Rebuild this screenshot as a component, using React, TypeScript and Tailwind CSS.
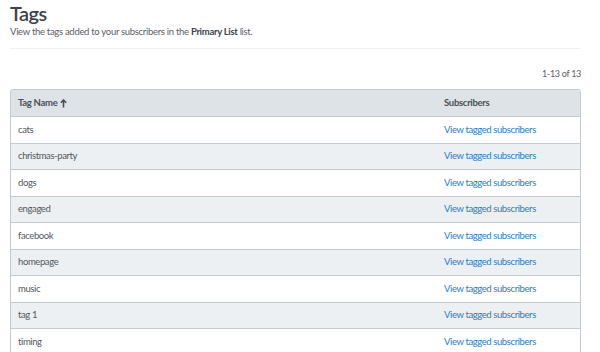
const tags = ["cats", "christmas-party", "dogs", "engaged", "facebook", "homepage", "music", "tag 1", "timing"];

export default function App() {
  return (
    <div
      className="h-[352px] w-[600px] overflow-hidden bg-white px-[10px] text-[#4a4f55]"
      style={{ fontFamily: "Lato, 'Noto Sans', sans-serif" }}
    >
      <h1 className="pt-[1px] text-[20px] font-semibold leading-[24px] tracking-[-0.6px] text-[#3d4349]">Tags</h1>
      <p className="text-[9.5px] leading-[14px] tracking-[-0.3px] text-[#5a6066]">
        View the tags added to your subscribers in the <span className="font-bold text-[#3d4349]">Primary List</span> list.
      </p>
      <div className="mt-[9px] w-[570px] border-t border-[#eef0f2]" />
      <div className="mt-[19px] flex w-[571px] justify-end text-[9px] leading-[12px] tracking-[-0.3px] text-[#5a6066]">1-13 of 13</div>
      <div className="mt-[9px] w-[571px] overflow-hidden rounded-t-[3px] border border-[#c3cbd0]">
        <div className="flex h-[26px] items-center bg-[#dde3e6] text-[9.5px] font-bold tracking-[-0.3px] text-[#4a4f55]">
          <div className="flex flex-1 items-center gap-[3px] pl-[7px]">
            Tag Name
            <svg width="7" height="9" viewBox="0 0 7 9" className="mt-[1px]">
              <path d="M3.5 1 L3.5 8.5 M0.8 3.8 L3.5 1 L6.2 3.8" stroke="#4a4f55" strokeWidth="1.6" fill="none" />
            </svg>
          </div>
          <div className="w-[136px]">Subscribers</div>
        </div>
        {tags.map((t, i) => (
          <div
            key={t}
            className={`flex h-[26.5px] items-center border-t border-[#c3cbd0] text-[9.5px] tracking-[-0.4px] ${
              i % 2 === 1 ? "bg-[#ecf0f2]" : "bg-white"
            }`}
          >
            <div className="flex-1 pl-[7px] text-[#53585e]">{t}</div>
            <div className="w-[136px] text-[#2f7bbf]">View tagged subscribers</div>
          </div>
        ))}
      </div>
    </div>
  );
}
